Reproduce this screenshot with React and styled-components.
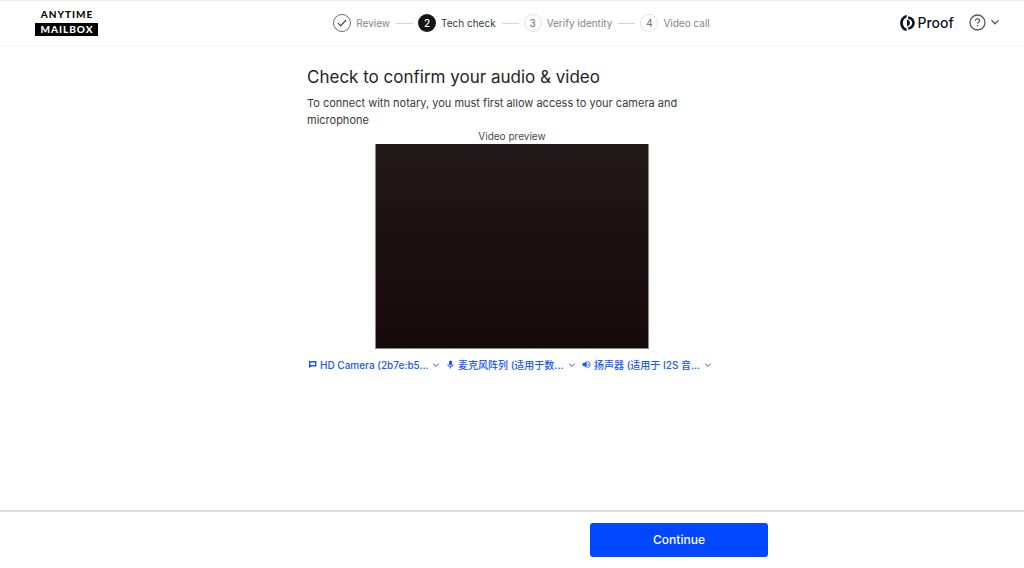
import React from "react";
import styled, { createGlobalStyle, css } from "styled-components";

const GlobalStyle = createGlobalStyle`
  *, *::before, *::after { box-sizing: border-box; }
  body {
    margin: 0;
    background: #fff;
    color: #242424;
    font-family: Inter, "Noto Sans CJK SC", sans-serif;
    font-size: 10px;
  }
  h1, p, ol, figure { margin: 0; padding: 0; }
  button, select { font: inherit; }
`;

const Page = styled.div`
  display: flex;
  flex-direction: column;
  min-height: 100vh;
`;

const Header = styled.header`
  display: grid;
  grid-template-columns: 1fr auto 1fr;
  align-items: center;
  height: 47px;
  padding: 0 16px 1px 35px;
  border-top: 1px solid #ededed;
  border-bottom: 1px solid #f5f5f5;
`;

const Brand = styled.div`
  justify-self: start;
  width: 63px;
  padding-bottom: 2px;
  color: #0a0a0a;
  font-family: Lato, sans-serif;
  font-size: 10px;
  font-weight: 900;
  line-height: 13px;
  letter-spacing: 1px;
  text-align: center;
`;

const BrandLine = styled.span`
  display: block;
  padding-left: 1px;
  ${({ $inverted }) =>
    $inverted
      ? css`
          background: #000;
          color: #fff;
        `
      : css`
          padding-bottom: 2px;
        `}
`;

const Steps = styled.ol`
  display: flex;
  align-items: center;
  list-style: none;
`;

const Step = styled.li`
  display: flex;
  align-items: center;
  gap: 5px;
  color: ${({ $current }) => ($current ? "#3a3a3a" : "#858582")};
  font-size: 10px;
  line-height: 18px;
  white-space: nowrap;

  &:not(:first-child)::before {
    content: "";
    flex: none;
    width: 17px;
    height: 1px;
    margin-left: 6px;
    background: #d6d6d4;
  }
`;

const stepMarks = {
  done: css`
    border: 1px solid #6b6b69;
    color: #242424;
  `,
  current: css`
    background: #151515;
    color: #fff;
    font-weight: 500;
  `,
  next: css`
    border: 1px solid #e3e3e1;
    color: #6b6b69;
  `,
};

const StepMark = styled.span`
  display: flex;
  flex: none;
  align-items: center;
  justify-content: center;
  width: 18px;
  height: 18px;
  border-radius: 50%;
  ${({ $state }) => stepMarks[$state]}
`;

const HeaderEnd = styled.div`
  display: flex;
  align-items: center;
  justify-self: end;
  gap: 12px;
`;

const Proof = styled.div`
  display: flex;
  align-items: center;
  gap: 2px;
  color: #0d1226;
  font-size: 14px;
  font-weight: 500;
  line-height: 18px;

  small {
    align-self: flex-end;
    font-size: 4px;
    line-height: 10px;
  }
`;

const HelpButton = styled.button`
  display: flex;
  align-items: center;
  gap: 4px;
  padding: 0 8px 2px 0;
  border: 0;
  background: none;
  color: #5c5a58;
`;

const Main = styled.main`
  flex: 1;
  width: 100%;
  max-width: 410px;
  margin: 0 auto;
  padding-top: 18px;
`;

const Title = styled.h1`
  color: #242424;
  font-size: 17px;
  font-weight: 400;
  line-height: 24px;
`;

const Intro = styled.p`
  margin-top: 6px;
  color: #3a3a3a;
  font-size: 11px;
  line-height: 17px;
`;

const Preview = styled.figure`
  display: flex;
  flex-direction: column;
  align-items: center;
`;

const PreviewLabel = styled.figcaption`
  color: #4a4a4a;
  font-size: 10px;
  line-height: 15px;
`;

const CameraView = styled.div`
  width: calc(100% * 2 / 3);
  aspect-ratio: 4 / 3;
  border: solid #8f8889;
  border-width: 0 1px 1px;
  background: linear-gradient(#221819, #1c1112 50%, #16090b) border-box;
`;

const Devices = styled.div`
  display: grid;
  grid-template-columns: repeat(3, 1fr);
  margin-top: 7px;
`;

const Device = styled.label`
  display: flex;
  align-items: center;
  gap: 3px;
  padding: 0 5px 0 1px;
  color: #1a56ff;

  svg { flex: none; }
`;

const DeviceSelect = styled.select`
  flex: 1;
  min-width: 0;
  height: 18px;
  padding: 0;
  border: 0;
  appearance: none;
  background: none;
  color: inherit;
  font-size: 10px;
  font-weight: 500;
`;

const Footer = styled.footer`
  padding: 11px 0;
  border-top: 2px solid #dcdcd8;
`;

const FooterInner = styled.div`
  display: flex;
  justify-content: flex-end;
  width: 100%;
  max-width: 512px;
  margin: 0 auto;
`;

const PrimaryButton = styled.button`
  width: 178px;
  height: 34px;
  padding: 0 0 1px;
  border: 0;
  border-radius: 3px;
  background: #0047ff;
  color: #fff;
  font-size: 12px;
  font-weight: 500;
`;

const Chevron = ({ size = 8 }) => (
  <svg width={size} height={size} viewBox="0 0 8 8" fill="none" stroke="currentColor" strokeWidth="1" aria-hidden="true">
    <path d="M1.2 2.6 4 5.4 6.8 2.6" />
  </svg>
);

const CheckIcon = () => (
  <svg width="10" height="10" viewBox="0 0 10 10" fill="none" stroke="currentColor" strokeWidth="1.1" aria-hidden="true">
    <path d="M1 5.2 3.7 7.8 9 2.2" />
  </svg>
);

const ProofMark = () => (
  <svg width="15" height="18" viewBox="0 0 15 18" aria-hidden="true">
    <path d="M6.6 0.9C2.9 1.5 0.2 4.8 0.2 9s2.7 7.5 6.4 8.1V14.5C4.4 13.9 2.9 11.8 2.9 9s1.5-4.9 3.7-5.5Z" fill="currentColor" />
    <path d="M8.2 2.3C11.9 2.6 14.8 5.4 14.8 9s-2.9 6.4-6.6 6.7V13.1C10.6 12.8 12.2 11.2 12.2 9S10.6 5.2 8.2 4.9Z" fill="currentColor" />
    <path d="M7 5.6C9 6.2 9.9 7.4 9.9 9S9 11.8 7 12.4Z" fill="currentColor" />
  </svg>
);

const HelpIcon = () => (
  <svg width="17" height="17" viewBox="0 0 17 17" fill="none" stroke="currentColor" strokeWidth="1.3" aria-hidden="true">
    <circle cx="8.5" cy="8.5" r="7.5" />
    <path d="M6.4 6.8C6.4 5.5 7.3 4.8 8.5 4.8s2.1.8 2.1 1.9c0 1.5-2.1 1.5-2.1 3.1" />
    <path d="M8.5 11v1.4" />
  </svg>
);

const CameraIcon = () => (
  <svg width="9" height="9" viewBox="0 0 9 9" fill="none" stroke="currentColor" strokeWidth="1.5" aria-hidden="true">
    <path d="M1.7 1.7H7.7V5.8H1.7Z" />
    <path d="M0.95 5.5V8.2L3.6 6Z" fill="currentColor" stroke="none" />
  </svg>
);

const MicIcon = () => (
  <svg width="9" height="9" viewBox="0 0 9 9" fill="none" stroke="currentColor" strokeWidth="0.9" aria-hidden="true">
    <rect x="3" y="0.6" width="3" height="4.8" rx="1.5" fill="currentColor" stroke="none" />
    <path d="M1.8 4.2a2.7 2.5 0 0 0 5.4 0M4.5 6.7v1.8" />
  </svg>
);

const SpeakerIcon = () => (
  <svg width="9" height="9" viewBox="0 0 9 9" fill="none" stroke="currentColor" strokeWidth="0.9" aria-hidden="true">
    <path d="M0.6 3.1H2.2L4.6 1V8L2.2 5.9H0.6Z" fill="currentColor" stroke="none" />
    <path d="M5.4 3a1.7 1.7 0 0 1 0 3M5.6 1.2a3.4 3.4 0 0 1 0 6.6" />
  </svg>
);

const steps = [
  { label: "Review", state: "done" },
  { label: "Tech check", state: "current" },
  { label: "Verify identity", state: "next" },
  { label: "Video call", state: "next" },
];

const devices = [
  { kind: "Camera", name: "HD Camera (2b7e:b5...", Icon: CameraIcon },
  { kind: "Microphone", name: "麦克风阵列 (适用于数...", Icon: MicIcon },
  { kind: "Speaker", name: "扬声器 (适用于 I2S 音...", Icon: SpeakerIcon },
];

export default function App() {
  return (
    <Page>
      <GlobalStyle />
      <Header>
        <Brand>
          <BrandLine>ANYTIME</BrandLine>
          <BrandLine $inverted>MAILBOX</BrandLine>
        </Brand>
        <Steps>
          {steps.map(({ label, state }, i) => (
            <Step key={label} $current={state === "current"} aria-current={state === "current" ? "step" : undefined}>
              <StepMark $state={state}>{state === "done" ? <CheckIcon /> : i + 1}</StepMark>
              {label}
            </Step>
          ))}
        </Steps>
        <HeaderEnd>
          <Proof>
            <ProofMark />
            <span>Proof</span>
            <small>.</small>
          </Proof>
          <HelpButton type="button" aria-label="Help">
            <HelpIcon />
            <Chevron size={10} />
          </HelpButton>
        </HeaderEnd>
      </Header>
      <Main>
        <Title>Check to confirm your audio &amp; video</Title>
        <Intro>To connect with notary, you must first allow access to your camera and microphone</Intro>
        <Preview>
          <PreviewLabel>Video preview</PreviewLabel>
          <CameraView />
        </Preview>
        <Devices>
          {devices.map(({ kind, name, Icon }) => (
            <Device key={kind}>
              <Icon />
              <DeviceSelect aria-label={kind} defaultValue={name}>
                <option>{name}</option>
              </DeviceSelect>
              <Chevron />
            </Device>
          ))}
        </Devices>
      </Main>
      <Footer>
        <FooterInner>
          <PrimaryButton type="button">Continue</PrimaryButton>
        </FooterInner>
      </Footer>
    </Page>
  );
}
